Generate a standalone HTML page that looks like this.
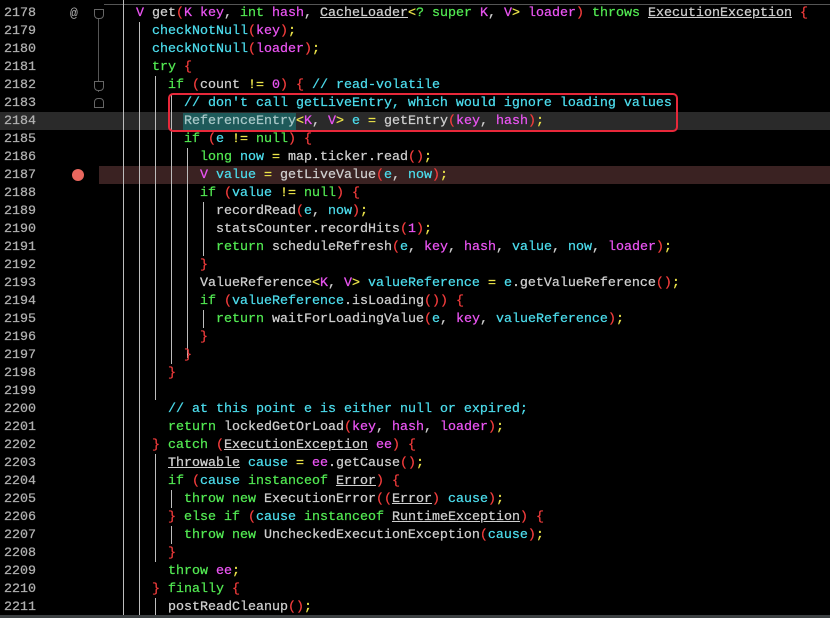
<!DOCTYPE html>
<html><head><meta charset="utf-8"><style>
*{margin:0;padding:0}
body{width:830px;height:618px;background:#000;overflow:hidden;position:relative;font-family:"Liberation Mono",monospace;font-size:13.33px}
.ln{position:absolute;left:0;height:18px;line-height:18px;white-space:pre;color:#cfcfcf;-webkit-text-stroke:0.25px currentColor}
.n{position:absolute;left:4px;color:#b0b0b0;width:40px}
.c{position:absolute;left:104px}
.k{color:#52e852}.p{color:#ea54f2}.l{color:#4cdcec}.b{color:#f23c3c}.o{color:#ece44a}.u{text-decoration:underline}
.cm{color:#4cdcec}
.v{position:absolute;width:1px;background:#bdbdbd}
</style></head><body>
<div style="position:absolute;left:0;top:112px;width:830px;height:18px;background:#2a2a2a"></div>
<div style="position:absolute;left:99px;top:166px;width:731px;height:18px;background:#3a2222"></div>
<div style="position:absolute;left:104px;top:4px;width:726px;height:1px;background:#555"></div>
<div class="v" style="left:98px;top:12px;height:80px;background:#555"></div>
<div class="v" style="left:123px;top:0;height:618px"></div>
<div class="v" style="left:139px;top:22px;height:596px"></div>
<div class="v" style="left:155px;top:76px;height:324px"></div>
<div class="v" style="left:155px;top:454px;height:108px"></div>
<div class="v" style="left:155px;top:598px;height:20px"></div>
<div class="v" style="left:171px;top:94px;height:270px"></div>
<div class="v" style="left:171px;top:490px;height:18px"></div>
<div class="v" style="left:171px;top:526px;height:18px"></div>
<div class="v" style="left:187px;top:148px;height:210px"></div>
<div class="v" style="left:203px;top:202px;height:54px"></div>
<div class="v" style="left:203px;top:310px;height:18px"></div>
<div style="position:absolute;left:72px;top:169px;width:12px;height:12px;border-radius:50%;background:#e8675e"></div>
<div style="position:absolute;left:70px;top:5px;height:18px;line-height:18px;color:#b0b0b0;font-size:13px">@</div>
<div style="position:absolute;left:94px;top:9px;width:8px;height:8px;border:1px solid #666;border-radius:0 0 4px 4px;background:#000"></div>
<div style="position:absolute;left:94px;top:81px;width:8px;height:8px;border:1px solid #666;border-radius:0 0 4px 4px;background:#000"></div>
<div style="position:absolute;left:94px;top:98px;width:8px;height:8px;border:1px solid #666;border-radius:4px 4px 0 0;background:#000"></div>
<div style="position:absolute;left:183px;top:113px;width:113px;height:17px;background:#1e5a5a"></div>
<div style="position:absolute;left:168px;top:93px;width:506px;height:35px;border:2px solid #e8283a;border-radius:5px"></div>

<div class="ln" style="top:5px"><span class="n">2178</span><span class="c">    <span class="p">V</span> get<span class="b">(</span><span class="p">K key</span>, <span class="k">int</span> <span class="p">hash</span>, <span class="u">CacheLoader</span><span class="o">&lt;</span><span class="k">? super</span> <span class="p">K</span>, <span class="p">V</span><span class="o">&gt;</span> <span class="p">loader</span><span class="b">)</span> <span class="k">throws</span> <span class="u">ExecutionException</span> <span class="b">{</span></span></div>
<div class="ln" style="top:23px"><span class="n">2179</span><span class="c">      <span class="l">checkNotNull</span><span class="b">(</span><span class="p">key</span><span class="b">)</span><span class="o">;</span></span></div>
<div class="ln" style="top:41px"><span class="n">2180</span><span class="c">      <span class="l">checkNotNull</span><span class="b">(</span><span class="p">loader</span><span class="b">)</span><span class="o">;</span></span></div>
<div class="ln" style="top:59px"><span class="n">2181</span><span class="c">      <span class="k">try</span> <span class="b">{</span></span></div>
<div class="ln" style="top:77px"><span class="n">2182</span><span class="c">        <span class="k">if</span> <span class="b">(</span>count <span class="o">!=</span> <span class="p">0</span><span class="b">)</span> <span class="b">{</span> <span class="cm">// read-volatile</span></span></div>
<div class="ln" style="top:95px"><span class="n">2183</span><span class="c">          <span class="cm">// don't call getLiveEntry, which would ignore loading values</span></span></div>
<div class="ln" style="top:113px"><span class="n">2184</span><span class="c">          <span style="color:#a8c8c8">ReferenceEntry</span><span class="o">&lt;</span><span class="p">K</span>, <span class="p">V</span><span class="o">&gt;</span> <span class="l">e</span> <span class="o">=</span> getEntry<span class="b">(</span><span class="p">key</span>, <span class="p">hash</span><span class="b">)</span><span class="o">;</span></span></div>
<div class="ln" style="top:131px"><span class="n">2185</span><span class="c">          <span class="k">if</span> <span class="b">(</span><span class="l">e</span> <span class="o">!=</span> <span class="k">null</span><span class="b">)</span> <span class="b">{</span></span></div>
<div class="ln" style="top:149px"><span class="n">2186</span><span class="c">            <span class="k">long</span> <span class="l">now</span> <span class="o">=</span> map.ticker.read<span class="b">()</span><span class="o">;</span></span></div>
<div class="ln" style="top:167px"><span class="n">2187</span><span class="c">            <span class="p">V</span> <span class="l">value</span> <span class="o">=</span> getLiveValue<span class="b">(</span><span class="l">e</span>, <span class="l">now</span><span class="b">)</span><span class="o">;</span></span></div>
<div class="ln" style="top:185px"><span class="n">2188</span><span class="c">            <span class="k">if</span> <span class="b">(</span><span class="l">value</span> <span class="o">!=</span> <span class="k">null</span><span class="b">)</span> <span class="b">{</span></span></div>
<div class="ln" style="top:203px"><span class="n">2189</span><span class="c">              recordRead<span class="b">(</span><span class="l">e</span>, <span class="l">now</span><span class="b">)</span><span class="o">;</span></span></div>
<div class="ln" style="top:221px"><span class="n">2190</span><span class="c">              statsCounter.recordHits<span class="b">(</span><span class="p">1</span><span class="b">)</span><span class="o">;</span></span></div>
<div class="ln" style="top:239px"><span class="n">2191</span><span class="c">              <span class="k">return</span> scheduleRefresh<span class="b">(</span><span class="l">e</span>, <span class="p">key</span>, <span class="p">hash</span>, <span class="l">value</span>, <span class="l">now</span>, <span class="p">loader</span><span class="b">)</span><span class="o">;</span></span></div>
<div class="ln" style="top:257px"><span class="n">2192</span><span class="c">            <span class="b">}</span></span></div>
<div class="ln" style="top:275px"><span class="n">2193</span><span class="c">            ValueReference<span class="o">&lt;</span><span class="p">K</span>, <span class="p">V</span><span class="o">&gt;</span> <span class="l">valueReference</span> <span class="o">=</span> <span class="l">e</span>.getValueReference<span class="b">()</span><span class="o">;</span></span></div>
<div class="ln" style="top:293px"><span class="n">2194</span><span class="c">            <span class="k">if</span> <span class="b">(</span><span class="l">valueReference</span>.isLoading<span class="b">())</span> <span class="b">{</span></span></div>
<div class="ln" style="top:311px"><span class="n">2195</span><span class="c">              <span class="k">return</span> waitForLoadingValue<span class="b">(</span><span class="l">e</span>, <span class="p">key</span>, <span class="l">valueReference</span><span class="b">)</span><span class="o">;</span></span></div>
<div class="ln" style="top:329px"><span class="n">2196</span><span class="c">            <span class="b">}</span></span></div>
<div class="ln" style="top:347px"><span class="n">2197</span><span class="c">          <span class="b">}</span></span></div>
<div class="ln" style="top:365px"><span class="n">2198</span><span class="c">        <span class="b">}</span></span></div>
<div class="ln" style="top:383px"><span class="n">2199</span></div>
<div class="ln" style="top:401px"><span class="n">2200</span><span class="c">        <span class="cm">// at this point e is either null or expired;</span></span></div>
<div class="ln" style="top:419px"><span class="n">2201</span><span class="c">        <span class="k">return</span> lockedGetOrLoad<span class="b">(</span><span class="p">key</span>, <span class="p">hash</span>, <span class="p">loader</span><span class="b">)</span><span class="o">;</span></span></div>
<div class="ln" style="top:437px"><span class="n">2202</span><span class="c">      <span class="b">}</span> <span class="k">catch</span> <span class="b">(</span><span class="u">ExecutionException</span> <span class="p">ee</span><span class="b">)</span> <span class="b">{</span></span></div>
<div class="ln" style="top:455px"><span class="n">2203</span><span class="c">        <span class="u">Throwable</span> <span class="l">cause</span> <span class="o">=</span> <span class="p">ee</span>.getCause<span class="b">()</span><span class="o">;</span></span></div>
<div class="ln" style="top:473px"><span class="n">2204</span><span class="c">        <span class="k">if</span> <span class="b">(</span><span class="l">cause</span> <span class="k">instanceof</span> <span class="u">Error</span><span class="b">)</span> <span class="b">{</span></span></div>
<div class="ln" style="top:491px"><span class="n">2205</span><span class="c">          <span class="k">throw new</span> ExecutionError<span class="b">((</span><span class="u">Error</span><span class="b">)</span> <span class="l">cause</span><span class="b">)</span><span class="o">;</span></span></div>
<div class="ln" style="top:509px"><span class="n">2206</span><span class="c">        <span class="b">}</span> <span class="k">else if</span> <span class="b">(</span><span class="l">cause</span> <span class="k">instanceof</span> <span class="u">RuntimeException</span><span class="b">)</span> <span class="b">{</span></span></div>
<div class="ln" style="top:527px"><span class="n">2207</span><span class="c">          <span class="k">throw new</span> UncheckedExecutionException<span class="b">(</span><span class="l">cause</span><span class="b">)</span><span class="o">;</span></span></div>
<div class="ln" style="top:545px"><span class="n">2208</span><span class="c">        <span class="b">}</span></span></div>
<div class="ln" style="top:563px"><span class="n">2209</span><span class="c">        <span class="k">throw</span> <span class="p">ee</span><span class="o">;</span></span></div>
<div class="ln" style="top:581px"><span class="n">2210</span><span class="c">      <span class="b">}</span> <span class="k">finally</span> <span class="b">{</span></span></div>
<div class="ln" style="top:599px"><span class="n">2211</span><span class="c">        postReadCleanup<span class="b">()</span><span class="o">;</span></span></div>
<div style="position:absolute;left:0;top:615px;width:830px;height:3px;background:#3c4042"></div>
</body></html>
